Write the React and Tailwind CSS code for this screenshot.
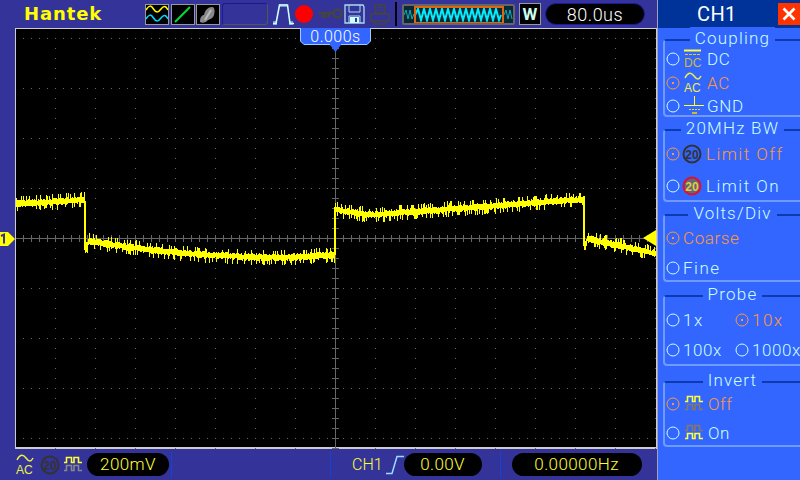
const W = 640, H = 420, CX = 319, CY = 209 // scope area, trace coords are relative to its top left

// little seeded random so the noise stays the same every load
let seed = 7
function rnd() {
  seed = (seed * 16807) % 2147483647
  return seed / 2147483647
}

function traceY(px) {
  // px is page x
  if (px < 85) return 204 - (px - 16) * 0.06
  if (px < 88) return 245
  if (px < 335) {
    const t = (px - 85) / 250
    return 240.5 + 17 * (1 - Math.pow(t * 1.25 - 1, 2)) - (t > 0.8 ? (t - 0.8) * 8 : 0)
  }
  if (px < 584) {
    const t = (px - 335) / 249
    if (px < 370) return 209.5 + (px - 335) * 0.16
    return 215 - (t - 0.14) * 18.5
  }
  if (px < 587) return 243
  return 238 + (px - 584) * 0.22
}

function buildTrace() {
  let d = ''
  for (let px = 16; px < 656; px++) {
    const y = traceY(px)
    const up = 2 + rnd() * 2 + (rnd() > 0.75 ? 4 : 0)
    const dn = 2 + rnd() * 2 + (rnd() > 0.75 ? 4 : 0)
    d += `M${px - 16} ${(y - 29 - up).toFixed(0)}V${(y - 29 + dn).toFixed(0)}`
  }
  return d
}
const tracePath = buildTrace()

function buildDots() {
  let d = ''
  for (let x = CX - 320; x <= W; x += 40) {
    for (let y = 9; y < H; y += 10) d += `M${x} ${y}h1v1h-1z`
  }
  for (let y = 9; y < H; y += 50) {
    for (let x = 7; x < W; x += 8) d += `M${x} ${y}h1v1h-1z`
  }
  return d
}
const dotsPath = buildDots()

function buildTicks() {
  let d = `M0 ${CY + 0.5}H${W}M${CX + 0.5} 0V${H}`
  for (let x = CX % 8; x < W; x += 8) d += `M${x + 0.5} ${CY - 3}v7`
  for (let y = CY % 10; y < H; y += 10) d += `M${CX - 3} ${y + 0.5}h7`
  return d
}
const ticksPath = buildTicks()

function Radio({on}) {
  return (
    <svg width="14" height="14" viewBox="0 0 14 14" className="shrink-0">
      <circle cx="7" cy="7" r="6" fill="none" stroke={on ? '#ff9933' : '#ccffff'} strokeWidth="1" />
      {on && <rect x="6" y="6" width="2" height="2" fill="#ff9933" />}
    </svg>
  )
}

function Group({title, className, children}) {
  return (
    <div className={`relative ml-[5px] rounded-tl-[4px] rounded-bl-[4px] border-l-2 border-b-2 border-t-2 border-[#0a3bb0] border-l-[#6f9aff] border-b-[#6f9aff] ${className}`}>
      <div className="absolute -top-[14px] left-0 right-0 flex justify-center">
        <span className="bg-[#3366ff] px-[5px] text-[17px] font-light leading-[22px] tracking-[1.2px] text-[#ccffff]">{title}</span>
      </div>
      {children}
    </div>
  )
}

function Row({on, label, spacing = 'tracking-[0.6px]', icon, className}) {
  return (
    <div className={`flex items-center ${className}`}>
      <Radio on={on} />
      {icon}
      <span className={`text-[17px] font-light leading-[20px] ${spacing} ${on ? 'text-[#ff9933]' : 'text-[#ccffff]'}`}>{label}</span>
    </div>
  )
}

function DcIcon() {
  return (
    <svg width="20" height="20" viewBox="0 0 20 20" className="ml-[4px] mr-[3px] shrink-0">
      <path d="M0 1.500H17" stroke="#ffff33" strokeWidth="2" />
      <path d="M1 5.500H17" stroke="#ddcc33" strokeDasharray="3 1" />
      <text x="0" y="18" fontSize="12" fill="#ccbb33" fontFamily="Liberation Sans">DC</text>
    </svg>
  )
}

function AcIcon({className = 'ml-[4px] mr-[3px]'}) {
  return (
    <svg width="20" height="22" viewBox="0 0 20 22" className={`${className} shrink-0`}>
      <path d="M1 6C4 0 7 0 10 4S15 8 17 4" fill="none" stroke="#eeee44" strokeWidth="1.500" />
      <text x="0" y="20" fontSize="12" fill="#eeee44" fontFamily="Liberation Sans">AC</text>
    </svg>
  )
}

function GndIcon() {
  return (
    <svg width="20" height="20" viewBox="0 0 20 20" className="ml-[4px] mr-[3px] shrink-0">
      <path d="M10.500 0V9M0 9.500H20" stroke="#ffff33" />
      <path d="M5 13.500H16" stroke="#dddd33" strokeDasharray="2 1" />
      <path d="M8 17H13" stroke="#ccbb33" strokeWidth="2" />
    </svg>
  )
}

function LimitIcon({on, className = 'ml-[2px] mr-[4px]'}) {
  return (
    <svg width="20" height="20" viewBox="0 0 20 20" className={`${className} shrink-0`}>
      <circle cx="10" cy="10" r="8.500" fill={on ? '#667' : 'none'} stroke={on ? '#dd1133' : '#333'} strokeWidth="2" />
      <text x="10" y="14.500" textAnchor="middle" fontSize="12" fill={on ? '#ddcc44' : '#333'} fontWeight="bold" fontFamily="Liberation Sans">20</text>
    </svg>
  )
}

function PulseIcon({top, bottom, className = 'mx-[5px]'}) {
  const p = 'M0 6.500H2.500V1.500H7.500V6.500H10V1.500H14.500V6.500H18'
  return (
    <svg width="18" height="17" viewBox="0 0 18 17" className={`${className} shrink-0`}>
      <path d={p} fill="none" stroke={top} strokeWidth="1.600" />
      <path d={p} transform="translate(0 8)" fill="none" stroke={bottom} strokeWidth="1.600" />
    </svg>
  )
}

function Pill({className, children}) {
  return <div className={`flex h-[23px] items-center justify-center rounded-full bg-black text-[17px] font-light tracking-[0.4px] ${className}`}>{children}</div>
}

function TopBar() {
  return (
    <div className="flex h-[28px] shrink-0 items-center bg-[#333399]">
      <span className="ml-[24px] w-[121px] text-[18px] font-bold leading-[28px] tracking-[0.9px] text-[#ffff00]" style={{fontFamily: '"DejaVu Sans", sans-serif'}}>Hantek</span>
      <div className="flex h-[21px] w-[24px] items-center justify-center border border-[#999] bg-black">
        <svg width="22" height="19" viewBox="0 0 22 19">
          <path d="M0 5C3 0 5 0 7.500 4S12 8 15 4 20 1 22 5" fill="none" stroke="#ffff00" strokeWidth="1.500" />
          <path d="M0 14C3 9 5 9 7.500 13S12 17 15 13 20 10 22 14" fill="none" stroke="#00ddff" strokeWidth="1.500" />
        </svg>
      </div>
      <div className="ml-[2px] flex h-[21px] w-[24px] items-center justify-center border border-[#999] bg-black">
        <svg width="22" height="19" viewBox="0 0 22 19"><path d="M3 17L18 2" stroke="#00dd33" strokeWidth="2" /></svg>
      </div>
      <div className="ml-[1px] flex h-[21px] w-[24px] items-center justify-center border border-[#999] bg-black">
        <svg width="22" height="19" viewBox="0 0 22 19">
          <path d="M3 17C3 12 5 10 7 10C8 5 11 2 15 2C18 2 18 7 17 10C16 14 12 14 10 16C8 18 5 18 3 17Z" fill="#888" />
          <path d="M8 15L14 5" stroke="#bbb" strokeWidth="2" />
        </svg>
      </div>
      <div className="ml-[2px] h-[22px] w-[46px] rounded-[3px] border border-[#1a1a99] border-r-[#555] border-b-[#555]" />
      <svg width="21" height="22" viewBox="0 0 21 22" className="ml-[5px]">
        <path d="M0 20.500H3L6.500 2H14.500L17 20.500H21" fill="none" stroke="#ccffff" strokeWidth="1.600" />
        <path d="M7 1V4M9 1V4M11 1V4M13 1V4M1 18V22M3 18V22M17 18V22M19 18V22" stroke="#ccffff" strokeWidth="1" />
      </svg>
      <div className="ml-[1px] h-[18px] w-[18px] rounded-full bg-[#ff0000]" />
      <svg width="24" height="12" viewBox="0 0 24 12" className="ml-[6px]">
        <circle cx="18.500" cy="5.500" r="4" fill="none" stroke="#444" strokeWidth="2.500" />
        <path d="M0 5H15M4 5V10M7 5V10M10 5V9" stroke="#444" strokeWidth="2.500" />
      </svg>
      <svg width="21" height="20" viewBox="0 0 21 20" className="ml-[1px]">
        <path d="M1 1H19L20 3V19H1Z" fill="#333399" stroke="#aaddee" strokeWidth="1.300" />
        <path d="M5 1V8H16V1M5 19V12H16V19" fill="none" stroke="#aaddee" />
        <rect x="6" y="13" width="9" height="6" fill="#ccffff" />
        <rect x="11" y="14" width="2" height="4" fill="#333399" />
      </svg>
      <svg width="20" height="21" viewBox="0 0 20 21" className="ml-[5px]">
        <path d="M5 1H15V9H5ZM1 10H19V17H1ZM4 17H16V20H4Z" fill="none" stroke="#444" strokeWidth="1.500" />
        <path d="M7 3.500H13M7 6H13" stroke="#444" />
      </svg>
      <div className="ml-[5px] h-[24px] w-[2px] bg-black" />
      <div className="ml-[5px] flex h-[21px] w-[113px] items-center rounded-[2px] bg-[#666] p-[2px]">
        <div className="relative h-[17px] w-full bg-[#0a2a33]">
          <svg width="109" height="17" viewBox="0 0 109 17" className="absolute inset-0">
            <path d="M0 9l2-5 2 9 2-9 2 9 2-5M100 9l2-5 2 9 2-9 2 9" fill="none" stroke="#11aabb" />
            <path d="M11 9L14 3 17 14 20 3 23 14 26 3 29 14 32 3 35 14 38 3 41 14 44 3 47 14 50 3 53 14 56 3 59 14 62 3 65 14 68 3 71 14 74 3 77 14 80 3 83 14 86 3 89 14 92 3 95 14 97 9" fill="none" stroke="#00eeff" strokeWidth="2" />
            <rect x="11" y="1" width="88" height="16" fill="none" stroke="#dd6611" strokeWidth="2" />
          </svg>
        </div>
      </div>
      <div className="ml-[4px] flex h-[22px] w-[22px] items-center justify-center border border-[#999] bg-black text-[17px] font-bold leading-none text-[#ccffee]">W</div>
      <div className="ml-[4px] flex h-[22px] w-[100px] items-center justify-center rounded-full border border-[#1a1a99] bg-black text-[18px] font-light tracking-[0.5px] text-[#ffffff]">80.0us</div>
    </div>
  )
}

function Scope() {
  return (
    <div className="flex min-h-0 flex-1 bg-[#333399]">
      <div className="relative ml-[15px] mr-[1px] w-[642px] border-x border-t border-b-2 border-[#cccccc] bg-black">
        <svg width={W} height={H} viewBox={`0 0 ${W} ${H}`} className="block">
          <path d={dotsPath} fill="#666" />
          <path d={ticksPath} stroke="#666" strokeWidth="1" fill="none" />
          <path d={tracePath} stroke="#ffff00" strokeWidth="1" fill="none" shapeRendering="crispEdges" />
          <path d="M69 172V221M319 178V226M568 167V217" stroke="#ffff00" strokeWidth="2" fill="none" shapeRendering="crispEdges" />
        </svg>
        {/* trigger position tag */}
        <svg width="71" height="26" viewBox="0 0 71 26" className="absolute left-[284px] -top-px">
          <path d="M0 0H71V13L67 17H41L35.500 24L30 17H4L0 13Z" fill="#3366ff" />
          <path d="M0.500 0V13L4 16.500H30M41 16.500H67L70.500 13V0" stroke="#99ccff" fill="none" />
        </svg>
        <span className="absolute left-[284px] -top-px w-[71px] text-center text-[16px] font-light leading-[17px] tracking-[0.5px] text-white">0.000s</span>
        {/* channel marker */}
        <svg width="15" height="16" viewBox="0 0 15 16" className="absolute -left-[16px] top-[202px]">
          <path d="M0 1H8L15 8L8 15H0Z" fill="#ffff00" />
          <path d="M1 5L4 3.500V12.500" stroke="#333399" strokeWidth="2" fill="none" />
        </svg>
        {/* trigger level marker */}
        <svg width="13" height="16" viewBox="0 0 13 16" className="absolute right-0 top-[201px]">
          <path d="M13 0V16L0 8Z" fill="#ffff00" />
        </svg>
      </div>
    </div>
  )
}

function BottomBar() {
  return (
    <div className="flex h-[31px] shrink-0 items-center bg-[#333399] text-[#ffff33]">
      <AcIcon className="ml-[16px] mr-[4px]" />
      <LimitIcon className="mr-[2px]" />
      <PulseIcon top="#ffff33" bottom="#888" className="ml-[2px]" />
      <Pill className="ml-[5px] w-[82px]">200mV</Pill>
      <div className="ml-[2px] h-[26px] w-px bg-[#1144dd]" />
      <div className="ml-[158px] h-[26px] w-px bg-[#1144dd]" />
      <span className="ml-[21px] text-[16px] font-light">CH1</span>
      <svg width="18" height="20" viewBox="0 0 18 20" className="ml-[3px]">
        <path d="M0 18.500H6L11 1.500H18" fill="none" stroke="#99ddff" strokeWidth="1.500" />
      </svg>
      <Pill className="w-[78px]">0.00V</Pill>
      <div className="ml-[18px] h-[26px] w-px bg-[#1144dd]" />
      <Pill className="ml-[11px] w-[130px]">0.00000Hz</Pill>
    </div>
  )
}

function SidePanel() {
  return (
    <div className="flex h-[480px] w-[143px] shrink-0 flex-col border-l border-[#a0a0c0] bg-[#3366ff]">
      <div className="flex h-[28px] shrink-0 items-center bg-[#003399]">
        <span className="ml-[39px] w-[81px] text-[20px] leading-none tracking-[0.4px] text-white">CH1</span>
        <div className="flex h-[22px] w-[22px] items-center justify-center bg-[#ff3300]">
          <svg width="14" height="14" viewBox="0 0 14 14"><path d="M1.500 1.500L12.500 12.500M12.500 1.500L1.500 12.500" stroke="#fff" strokeWidth="2.600" /></svg>
        </div>
      </div>
      <Group title="Coupling" className="mt-[11px] h-[78px] pt-[6px]">
        <Row on={false} label="DC" icon={<DcIcon />} className="h-[24px] pl-[1px]" />
        <Row on label="AC" icon={<AcIcon />} className="h-[24px] pl-[1px]" />
        <Row on={false} label="GND" icon={<GndIcon />} className="h-[22px] pl-[1px]" />
      </Group>
      <Group title="20MHz BW" className="mt-[12px] h-[73px] pt-[7px]">
        <Row on label="Limit Off" spacing="tracking-[1.500px]" icon={<LimitIcon on={false} />} className="h-[32px] pl-[1px]" />
        <Row on={false} label="Limit On" spacing="tracking-[1.500px]" icon={<LimitIcon on />} className="h-[31px] pl-[1px]" />
      </Group>
      <Group title="Volts/Div" className="mt-[12px] h-[68px] pt-[7px]">
        <Row on label="Coarse" className="h-[30px] pl-[1px] [&>span]:ml-[3px]" />
        <Row on={false} label="Fine" spacing="tracking-[1.500px]" className="h-[30px] pl-[1px] [&>span]:ml-[3px]" />
      </Group>
      <Group title="Probe" className="mt-[13px] h-[71px] pt-[7px]">
        <div className="grid h-[31px] grid-cols-[69px_1fr] items-center pl-[1px]">
          <Row on={false} label="1x" spacing="tracking-[1.500px]" className="[&>span]:ml-[3px]" />
          <Row on label="10x" spacing="tracking-[1.500px]" className="[&>span]:ml-[3px]" />
        </div>
        <div className="grid h-[30px] grid-cols-[69px_1fr] items-center whitespace-nowrap pl-[1px]">
          <Row on={false} label="100x" className="[&>span]:ml-[3px]" />
          <Row on={false} label="1000x" className="[&>span]:ml-[3px]" />
        </div>
      </Group>
      <Group title="Invert" className="mt-[15px] h-[66px] pt-[6px]">
        <Row on label="Off" icon={<PulseIcon top="#ffff33" bottom="#887766" />} className="h-[29px] pl-[1px]" />
        <Row on={false} label="On" icon={<PulseIcon top="#887766" bottom="#ffff33" />} className="h-[29px] pl-[1px]" />
      </Group>
    </div>
  )
}

export default function App() {
  return (
    <div className="flex h-[480px] w-[800px] overflow-hidden bg-[#333399] text-[16px]" style={{fontFamily: 'Roboto, "Liberation Sans", sans-serif'}}>
      <div className="flex w-[657px] shrink-0 flex-col">
        <TopBar />
        <Scope />
        <BottomBar />
      </div>
      <SidePanel />
    </div>
  )
}
